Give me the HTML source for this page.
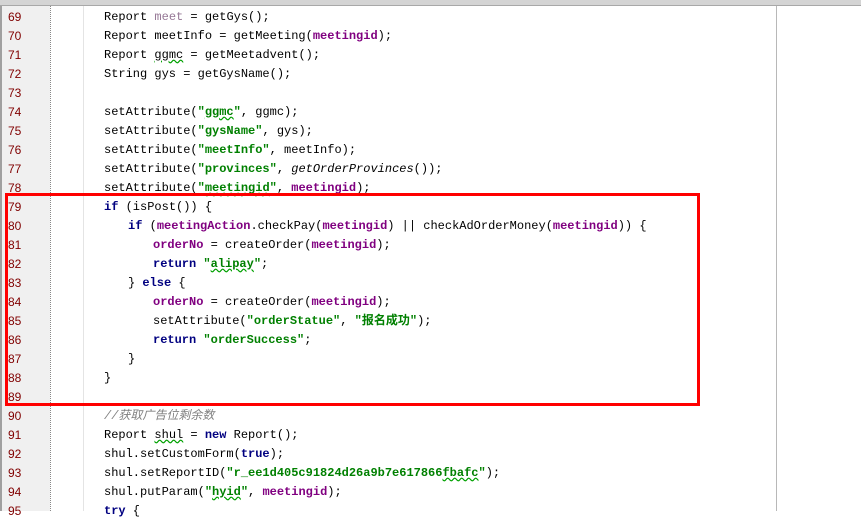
<!DOCTYPE html>
<html><head><meta charset="utf-8"><style>
body{margin:0;width:861px;height:511px;overflow:hidden;background:#fff;position:relative;font-family:"Liberation Mono","Noto Sans CJK SC",monospace;font-size:12px;}
.top{position:absolute;left:0;top:0;width:861px;height:5px;background:#d4d4d4;border-bottom:1px solid #a8a8a8;}
.gut{position:absolute;left:0;top:6px;width:50px;height:505px;background:#f0f0f0;border-left:2px solid #a0a0a0;box-sizing:border-box;}
.dot{position:absolute;left:50px;top:6px;height:505px;border-left:1px dotted #888;}
.g1{position:absolute;left:83px;top:6px;height:505px;border-left:1px solid #e4e4e4;}
.vr{position:absolute;left:776px;top:6px;height:505px;border-left:1px solid #b8b8b8;}
.ln{position:absolute;left:8px;color:#800000;font-family:"Liberation Sans",sans-serif;font-size:12px;line-height:14px;}
.c{position:absolute;white-space:pre;color:#000;line-height:14px;height:14px;}
.k{color:#000080;font-weight:bold}
.p{color:#800080;font-weight:bold}
.s{color:#008000;font-weight:bold}
.cm{color:#808080;font-style:italic}
.u{text-decoration:underline wavy #00a000;}
.box{position:absolute;left:5px;top:193px;width:695px;height:213px;border:3px solid #f00;box-sizing:border-box;}
</style></head><body>
<div class="top"></div>
<div class="gut"></div><div class="dot"></div><div class="g1"></div><div class="vr"></div>
<div class="ln" style="top:10px">69</div><div class="ln" style="top:29px">70</div><div class="ln" style="top:48px">71</div><div class="ln" style="top:67px">72</div><div class="ln" style="top:86px">73</div><div class="ln" style="top:105px">74</div><div class="ln" style="top:124px">75</div><div class="ln" style="top:143px">76</div><div class="ln" style="top:162px">77</div><div class="ln" style="top:181px">78</div><div class="ln" style="top:200px">79</div><div class="ln" style="top:219px">80</div><div class="ln" style="top:238px">81</div><div class="ln" style="top:257px">82</div><div class="ln" style="top:276px">83</div><div class="ln" style="top:295px">84</div><div class="ln" style="top:314px">85</div><div class="ln" style="top:333px">86</div><div class="ln" style="top:352px">87</div><div class="ln" style="top:371px">88</div><div class="ln" style="top:390px">89</div><div class="ln" style="top:409px">90</div><div class="ln" style="top:428px">91</div><div class="ln" style="top:447px">92</div><div class="ln" style="top:466px">93</div><div class="ln" style="top:485px">94</div><div class="ln" style="top:504px">95</div>

<div class="c" style="left:104px;top:10px">Report <span style="color:#967896">meet</span> = getGys();</div>
<div class="c" style="left:104px;top:29px">Report meetInfo = getMeeting(<span class="p">meetingid</span>);</div>
<div class="c" style="left:104px;top:48px">Report <span class="u">ggmc</span> = getMeetadvent();</div>
<div class="c" style="left:104px;top:67px">String gys = getGysName();</div>
<div class="c" style="left:104px;top:105px">setAttribute(<span class="s">"<span class="u">ggmc</span>"</span>, ggmc);</div>
<div class="c" style="left:104px;top:124px">setAttribute(<span class="s">"gysName"</span>, gys);</div>
<div class="c" style="left:104px;top:143px">setAttribute(<span class="s">"meetInfo"</span>, meetInfo);</div>
<div class="c" style="left:104px;top:162px">setAttribute(<span class="s">"provinces"</span>, <i>getOrderProvinces</i>());</div>
<div class="c" style="left:104px;top:181px">setAttribute(<span class="s">"<span class="u">meetingid</span>"</span>, <span class="p">meetingid</span>);</div>
<div class="c" style="left:104px;top:200px"><span class="k">if</span> (isPost()) {</div>
<div class="c" style="left:128px;top:219px"><span class="k">if</span> (<span class="p">meetingAction</span>.checkPay(<span class="p">meetingid</span>) || checkAdOrderMoney(<span class="p">meetingid</span>)) {</div>
<div class="c" style="left:153px;top:238px"><span class="p">orderNo</span> = createOrder(<span class="p">meetingid</span>);</div>
<div class="c" style="left:153px;top:257px"><span class="k">return</span> <span class="s">"<span class="u">alipay</span>"</span>;</div>
<div class="c" style="left:128px;top:276px">} <span class="k">else</span> {</div>
<div class="c" style="left:153px;top:295px"><span class="p">orderNo</span> = createOrder(<span class="p">meetingid</span>);</div>
<div class="c" style="left:153px;top:314px">setAttribute(<span class="s">"orderStatue"</span>, <span class="s">"报名成功"</span>);</div>
<div class="c" style="left:153px;top:333px"><span class="k">return</span> <span class="s">"orderSuccess"</span>;</div>
<div class="c" style="left:128px;top:352px">}</div>
<div class="c" style="left:104px;top:371px">}</div>
<div class="c" style="left:104px;top:409px"><span class="cm">//获取广告位剩余数</span></div>
<div class="c" style="left:104px;top:428px">Report <span class="u">shul</span> = <span class="k">new</span> Report();</div>
<div class="c" style="left:104px;top:447px">shul.setCustomForm(<span class="k">true</span>);</div>
<div class="c" style="left:104px;top:466px">shul.setReportID(<span class="s">"r_ee1d405c91824d26a9b7e617866<span class="u">fbafc</span>"</span>);</div>
<div class="c" style="left:104px;top:485px">shul.putParam(<span class="s">"<span class="u">hyid</span>"</span>, <span class="p">meetingid</span>);</div>
<div class="c" style="left:104px;top:504px"><span class="k">try</span> {</div>
<div class="box"></div>
</body></html>
